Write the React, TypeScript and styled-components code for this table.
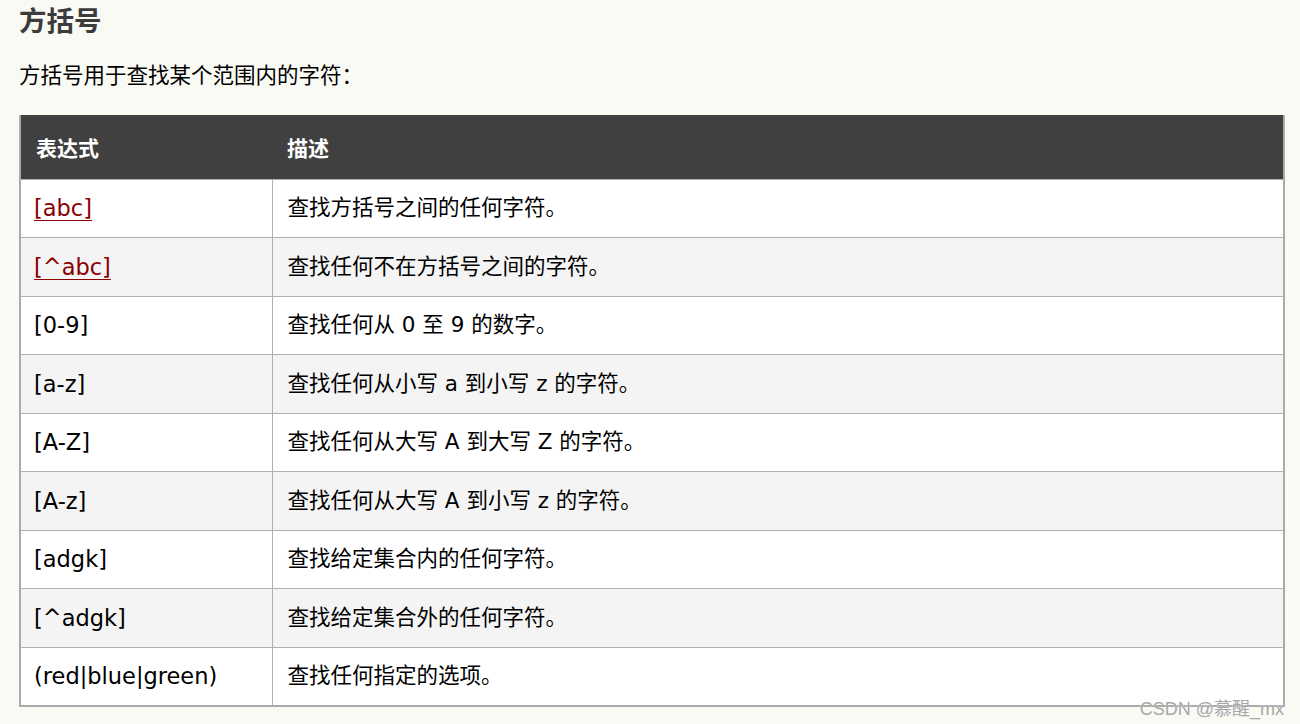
import React from "react";
import styled, { createGlobalStyle } from "styled-components";

const Global = createGlobalStyle`
  html, body { margin: 0; padding: 0; background: #fafaf5; }
  body { font-family: "DejaVu Sans", "Noto Sans CJK SC", sans-serif; color: #000; }
`;

const Page = styled.div`
  position: relative;
  width: 1300px;
  height: 724px;
  padding-left: 19px;
  box-sizing: border-box;
  overflow: hidden;
`;

const Title = styled.h2`
  margin: 0;
  font-size: 27.5px;
  line-height: 38px;
  font-weight: bold;
  color: #3c3c3c;
  font-family: "Noto Sans CJK SC", sans-serif;
`;

const Intro = styled.p`
  margin: 23px 0 24px;
  font-size: 21.5px;
  line-height: 30px;
  font-family: "DejaVu Sans", "Noto Sans CJK SC", sans-serif;
`;

const Table = styled.table`
  width: 1266px;
  border-collapse: collapse;
  border: 2px solid #aaa;
  border-top: none;
  font-size: 21.5px;
`;

const HeadCell = styled.th<{ $w?: number }>`
  background: #404040;
  color: #fff;
  text-align: left;
  font-weight: bold;
  font-size: 21px;
  height: 64px;
  padding: 0 0 0 15px;
  box-sizing: border-box;
  width: ${(p) => (p.$w ? `${p.$w}px` : "auto")};
  font-family: "Noto Sans CJK SC", sans-serif;
  border: none;
`;

const Row = styled.tr<{ $alt: boolean }>`
  background: ${(p) => (p.$alt ? "#f4f4f4" : "#ffffff")};
`;

const Cell = styled.td<{ $expr?: boolean }>`
  height: 57.5px;
  padding: 0 0 0 ${(p) => (p.$expr ? "13px" : "15px")};
  border: 1px solid #b0b0b0;
  vertical-align: middle;
  line-height: 28px;
  font-size: ${(p) => (p.$expr ? "22.5px" : "21.5px")};
`;

const Link = styled.a`
  color: #8b0000;
  text-decoration: underline;
  text-underline-offset: 4px;
  text-decoration-thickness: 1px;
`;

const Watermark = styled.div`
  position: absolute;
  right: 16px;
  top: 694px;
  font-family: "Liberation Sans", "Noto Sans CJK SC", sans-serif;
  font-size: 18px;
  color: #a6a6a6;
  text-shadow: 0 0 1px #fff;
`;

const rows: { expr: string; desc: string; link?: boolean }[] = [
  { expr: "[abc]", desc: "查找方括号之间的任何字符。", link: true },
  { expr: "[^abc]", desc: "查找任何不在方括号之间的字符。", link: true },
  { expr: "[0-9]", desc: "查找任何从 0 至 9 的数字。" },
  { expr: "[a-z]", desc: "查找任何从小写 a 到小写 z 的字符。" },
  { expr: "[A-Z]", desc: "查找任何从大写 A 到大写 Z 的字符。" },
  { expr: "[A-z]", desc: "查找任何从大写 A 到小写 z 的字符。" },
  { expr: "[adgk]", desc: "查找给定集合内的任何字符。" },
  { expr: "[^adgk]", desc: "查找给定集合外的任何字符。" },
  { expr: "(red|blue|green)", desc: "查找任何指定的选项。" },
];

export default function App() {
  return (
    <>
      <Global />
      <Page>
        <Title>方括号</Title>
        <Intro>方括号用于查找某个范围内的字符：</Intro>
        <Table>
          <thead>
            <tr>
              <HeadCell $w={252}>表达式</HeadCell>
              <HeadCell>描述</HeadCell>
            </tr>
          </thead>
          <tbody>
            {rows.map((r, i) => (
              <Row key={r.expr} $alt={i % 2 === 1}>
                <Cell $expr>{r.link ? <Link href="#">{r.expr}</Link> : r.expr}</Cell>
                <Cell>{r.desc}</Cell>
              </Row>
            ))}
          </tbody>
        </Table>
        <Watermark>CSDN @慕醒_mx</Watermark>
      </Page>
    </>
  );
}
